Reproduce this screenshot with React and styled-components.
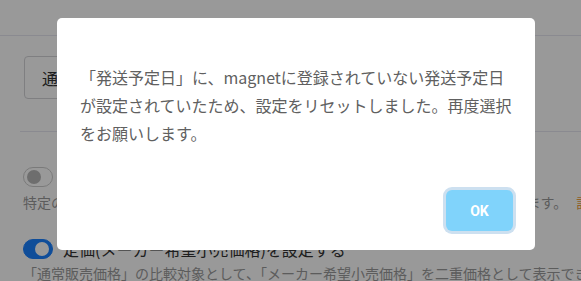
import React from 'react';
import styled, { createGlobalStyle } from 'styled-components';

const GlobalStyle = createGlobalStyle`
  html, body {
    margin: 0;
    padding: 0;
    background: #ffffff;
    overflow: hidden;
  }
  body {
    font-family: "Noto Sans CJK JP", "Noto Sans", sans-serif;
  }
`;

const Page = styled.div`
  width: 581px;
  height: 281px;
  overflow: hidden;
  background: #ffffff;
`;

const TopBar = styled.div`
  height: 35px;
  border-bottom: 1px solid #e6e6f0;
`;

const Content = styled.div`
  padding-left: 20px;
`;

const FieldBlock = styled.div`
  padding: 20px 0 32px 4px;
`;

const SelectBox = styled.div`
  box-sizing: border-box;
  width: 300px;
  height: 43px;
  border: 1px solid #d4d4d8;
  border-radius: 4px;
  display: flex;
  align-items: center;
  padding-left: 17px;
  font-size: 16px;
  color: #333333;
`;

const Divider = styled.div`
  border-top: 1px solid #e6e6f0;
`;

const Settings = styled.div`
  padding: 35px 0 0 3px;
  white-space: nowrap;
`;

const ToggleRow = styled.div`
  display: flex;
  align-items: center;
  gap: 10px;
  height: 20px;
  margin-top: ${(p) => p.$mt || 0}px;
`;

const Switch = styled.span`
  box-sizing: border-box;
  width: 30px;
  height: 20px;
  border-radius: 10px;
  flex-shrink: 0;
  display: flex;
  align-items: center;
  padding: 0 3px;
  justify-content: ${(p) => (p.$on ? 'flex-end' : 'flex-start')};
  background: ${(p) => (p.$on ? '#1a80ff' : '#ffffff')};
  border: 1px solid ${(p) => (p.$on ? '#1a80ff' : '#cccccc')};
`;

const Knob = styled.span`
  width: 14px;
  height: 14px;
  border-radius: 50%;
  background: ${(p) => (p.$on ? '#ffffff' : '#b8b8b8')};
`;

const Label = styled.span`
  font-size: 16px;
  color: #333333;
  line-height: 20px;
`;

const Desc = styled.div`
  font-size: 14px;
  line-height: 20px;
  color: #9a9a9a;
  margin-top: ${(p) => p.$mt}px;
`;

const Link = styled.span`
  color: #f0a040;
  margin-left: 9px;
`;

const Backdrop = styled.div`
  position: fixed;
  inset: 0;
  background: rgba(0, 0, 0, 0.4);
  display: flex;
  align-items: flex-start;
  padding: 18px 0 0 57px;
`;

const Modal = styled.div`
  box-sizing: border-box;
  width: 478px;
  height: 232px;
  background: #ffffff;
  border-radius: 5px;
  display: flex;
  flex-direction: column;
`;

const Body = styled.div`
  flex: 1;
  padding: 45px 21px 0 23px;
  font-size: 16px;
  line-height: 28px;
  color: #606060;
`;

const Footer = styled.div`
  display: flex;
  justify-content: flex-end;
  padding: 0 22px 19px;
`;

const OkButton = styled.button`
  width: 67px;
  height: 41px;
  border: none;
  border-radius: 6px;
  background: #80d3fb;
  box-shadow: 0 0 0 3px #cde0f0;
  color: #ffffff;
  font-family: Roboto, "Noto Sans", sans-serif;
  font-weight: 700;
  font-size: 14px;
  padding: 0;
`;

export default function App() {
  return (
    <>
      <GlobalStyle />
      <Page>
        <TopBar />
        <Content>
          <FieldBlock>
            <SelectBox>通常販売価格</SelectBox>
          </FieldBlock>
          <Divider />
          <Settings>
            <ToggleRow>
              <Switch>
                <Knob />
              </Switch>
              <Label>セール価格を設定する</Label>
            </ToggleRow>
            <Desc $mt={5}>
              特定の期間のみ商品の販売価格を変更し、セール価格として表示することができます。
              <Link>詳細</Link>
            </Desc>
            <ToggleRow $mt={27}>
              <Switch $on>
                <Knob $on />
              </Switch>
              <Label>定価(メーカー希望小売価格)を設定する</Label>
            </ToggleRow>
            <Desc $mt={4}>
              「通常販売価格」の比較対象として、「メーカー希望小売価格」を二重価格として表示できます。
            </Desc>
          </Settings>
        </Content>
      </Page>
      <Backdrop>
        <Modal role="dialog">
          <Body>
            「発送予定日」に、magnetに登録されていない発送予定日が設定されていたため、設定をリセットしました。再度選択をお願いします。
          </Body>
          <Footer>
            <OkButton>OK</OkButton>
          </Footer>
        </Modal>
      </Backdrop>
    </>
  );
}
